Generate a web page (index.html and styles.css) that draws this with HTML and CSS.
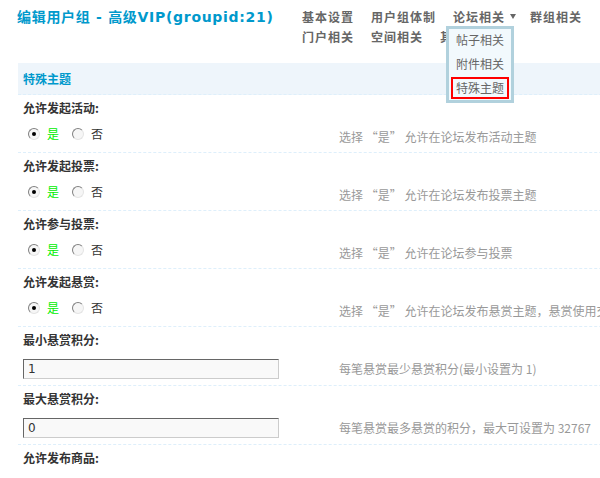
FILE: index.html
```html
<!DOCTYPE html>
<html lang="zh-CN">
<head>
<meta charset="utf-8">
<title>编辑用户组</title>
<link rel="stylesheet" href="styles.css">
</head>
<body>
<div class="page">
  <div class="itemtitle">
    <h3 class="title">编辑用户组 - 高级VIP(groupid:21)</h3>
    <ul class="tabs">
      <li class="tab">基本设置</li>
      <li class="tab">用户组体制</li>
      <li class="tab tab-menu">论坛相关<i class="caret"></i>
        <ul class="dropmenu">
          <li class="drop-item">帖子相关</li>
          <li class="drop-item">附件相关</li>
          <li class="drop-item current">特殊主题</li>
        </ul>
      </li>
      <li class="tab">群组相关</li>
      <li class="tab">门户相关</li>
      <li class="tab">空间相关</li>
      <li class="tab">其他</li>
    </ul>
  </div>

  <div class="section">
    <div class="partition">特殊主题</div>

    <div class="setting">
      <div class="label">允许发起活动:</div>
      <div class="value radio-value">
        <div class="rowform"><label class="opt"><input type="radio" name="r1" checked><span class="checked">是</span></label><label class="opt"><input type="radio" name="r1"><span>否</span></label></div>
        <div class="tips">选择 “是” 允许在论坛发布活动主题</div>
      </div>
    </div>

    <div class="setting">
      <div class="label">允许发起投票:</div>
      <div class="value radio-value">
        <div class="rowform"><label class="opt"><input type="radio" name="r2" checked><span class="checked">是</span></label><label class="opt"><input type="radio" name="r2"><span>否</span></label></div>
        <div class="tips">选择 “是” 允许在论坛发布投票主题</div>
      </div>
    </div>

    <div class="setting">
      <div class="label">允许参与投票:</div>
      <div class="value radio-value">
        <div class="rowform"><label class="opt"><input type="radio" name="r3" checked><span class="checked">是</span></label><label class="opt"><input type="radio" name="r3"><span>否</span></label></div>
        <div class="tips">选择 “是” 允许在论坛参与投票</div>
      </div>
    </div>

    <div class="setting">
      <div class="label">允许发起悬赏:</div>
      <div class="value radio-value">
        <div class="rowform"><label class="opt"><input type="radio" name="r4" checked><span class="checked">是</span></label><label class="opt"><input type="radio" name="r4"><span>否</span></label></div>
        <div class="tips">选择 “是” 允许在论坛发布悬赏主题，悬赏使用交易积分</div>
      </div>
    </div>

    <div class="setting">
      <div class="label">最小悬赏积分:</div>
      <div class="value input-value">
        <div class="rowform"><input class="txt" type="text" value="1"></div>
        <div class="tips">每笔悬赏最少悬赏积分(最小设置为 1)</div>
      </div>
    </div>

    <div class="setting">
      <div class="label">最大悬赏积分:</div>
      <div class="value input-value">
        <div class="rowform"><input class="txt" type="text" value="0"></div>
        <div class="tips">每笔悬赏最多悬赏的积分，最大可设置为 32767</div>
      </div>
    </div>

    <div class="setting">
      <div class="label">允许发布商品:</div>
      <div class="value radio-value">
        <div class="rowform"><label class="opt"><input type="radio" name="r5" checked><span class="checked">是</span></label><label class="opt"><input type="radio" name="r5"><span>否</span></label></div>
        <div class="tips">选择 “是” 允许在论坛发布商品主题</div>
      </div>
    </div>
  </div>
</div>
</body>
</html>
```

FILE: styles.css
```css
html, body {
  margin: 0;
  padding: 0;
  overflow: hidden;
  background: #fff;
}

body {
  font-family: "Noto Sans CJK SC", sans-serif;
  font-size: 12px;
  line-height: 16px;
  color: #333;
}

.page {
  padding: 7px 0 0 18px;
  width: 960px;
}

.itemtitle {
  display: flex;
  align-items: flex-start;
  height: 56px;
}

.title {
  margin: 0 0 0 -1px;
  width: 285px;
  flex: none;
  font-family: "DejaVu Sans", "Noto Sans CJK SC", sans-serif;
  font-size: 14px;
  font-weight: bold;
  line-height: 20px;
  color: #09c;
  letter-spacing: 0.7px;
  white-space: nowrap;
}

.tabs {
  list-style: none;
  margin: 0;
  padding: 0;
  display: flex;
  flex-wrap: wrap;
  width: 298px;
}

.tab {
  position: relative;
  margin-right: 17px;
  line-height: 20px;
  font-weight: bold;
  color: #666;
  letter-spacing: 1px;
  white-space: nowrap;
}

.tab-menu {
  margin-right: 14px;
}

.caret {
  display: inline-block;
  width: 0;
  height: 0;
  margin-left: 5px;
  vertical-align: 3px;
  border-left: 3.5px solid transparent;
  border-right: 3.5px solid transparent;
  border-top: 5px solid #666;
}

.dropmenu {
  position: absolute;
  left: -7px;
  top: 19px;
  z-index: 5;
  list-style: none;
  margin: 0;
  padding: 0 2px 1px 2px;
  border: 3px solid #b1d1dd;
  background: #f2f9fd;
  width: 58px;
}

.drop-item {
  height: 22px;
  line-height: 22px;
  margin-bottom: 2px;
  padding-left: 5px;
  box-sizing: border-box;
  font-weight: normal;
  color: #666;
  letter-spacing: 0;
}

.drop-item:last-child {
  margin-bottom: 0;
}

.drop-item.current {
  border: 2px solid #f00;
  padding-left: 3px;
  line-height: 18px;
}

.section {
  width: 940px;
}

.partition {
  height: 31px;
  padding-left: 5px;
  background: #eef5fb;
  border-bottom: 1px dashed #deeffb;
  color: #09c;
  font-weight: bold;
  line-height: 31px;
}

.setting {
  border-bottom: 1px dashed #deeffb;
}

.label {
  height: 28px;
  padding-left: 5px;
  line-height: 26px;
  font-weight: bold;
  color: #333;
}

.value {
  display: flex;
  align-items: flex-start;
}

.radio-value {
  height: 29px;
}

.input-value {
  height: 30px;
}

.rowform {
  width: 311px;
  flex: none;
  padding-left: 5px;
  display: flex;
}

.tips {
  padding: 6px 0 0 5px;
  line-height: 16px;
  color: #999;
  white-space: nowrap;
}

.opt {
  display: flex;
  align-items: center;
  margin-top: 3px;
  margin-right: 8px;
  line-height: 16px;
}

.opt input {
  appearance: none;
  -webkit-appearance: none;
  width: 12px;
  height: 12px;
  margin: 0 7px 0 5px;
  border: 1px solid;
  border-color: #808080 #e4e4e4 #e4e4e4 #808080;
  border-radius: 50%;
  background: #f6f6f6;
  box-sizing: border-box;
  position: relative;
}

.opt input:checked::after {
  content: "";
  position: absolute;
  left: 3px;
  top: 3px;
  width: 4px;
  height: 4px;
  border-radius: 50%;
  background: #000;
}

.checked {
  color: #0e0;
}

.txt {
  display: block;
  margin: 4px 0 0 0;
  width: 256px;
  height: 20px;
  box-sizing: border-box;
  padding: 0 0 0 4px;
  border: 1px solid;
  border-color: #666 #ccc #ccc #666;
  background: #f9f9f9;
  font-family: "DejaVu Sans", sans-serif;
  font-size: 12px;
  color: #333;
}
```
